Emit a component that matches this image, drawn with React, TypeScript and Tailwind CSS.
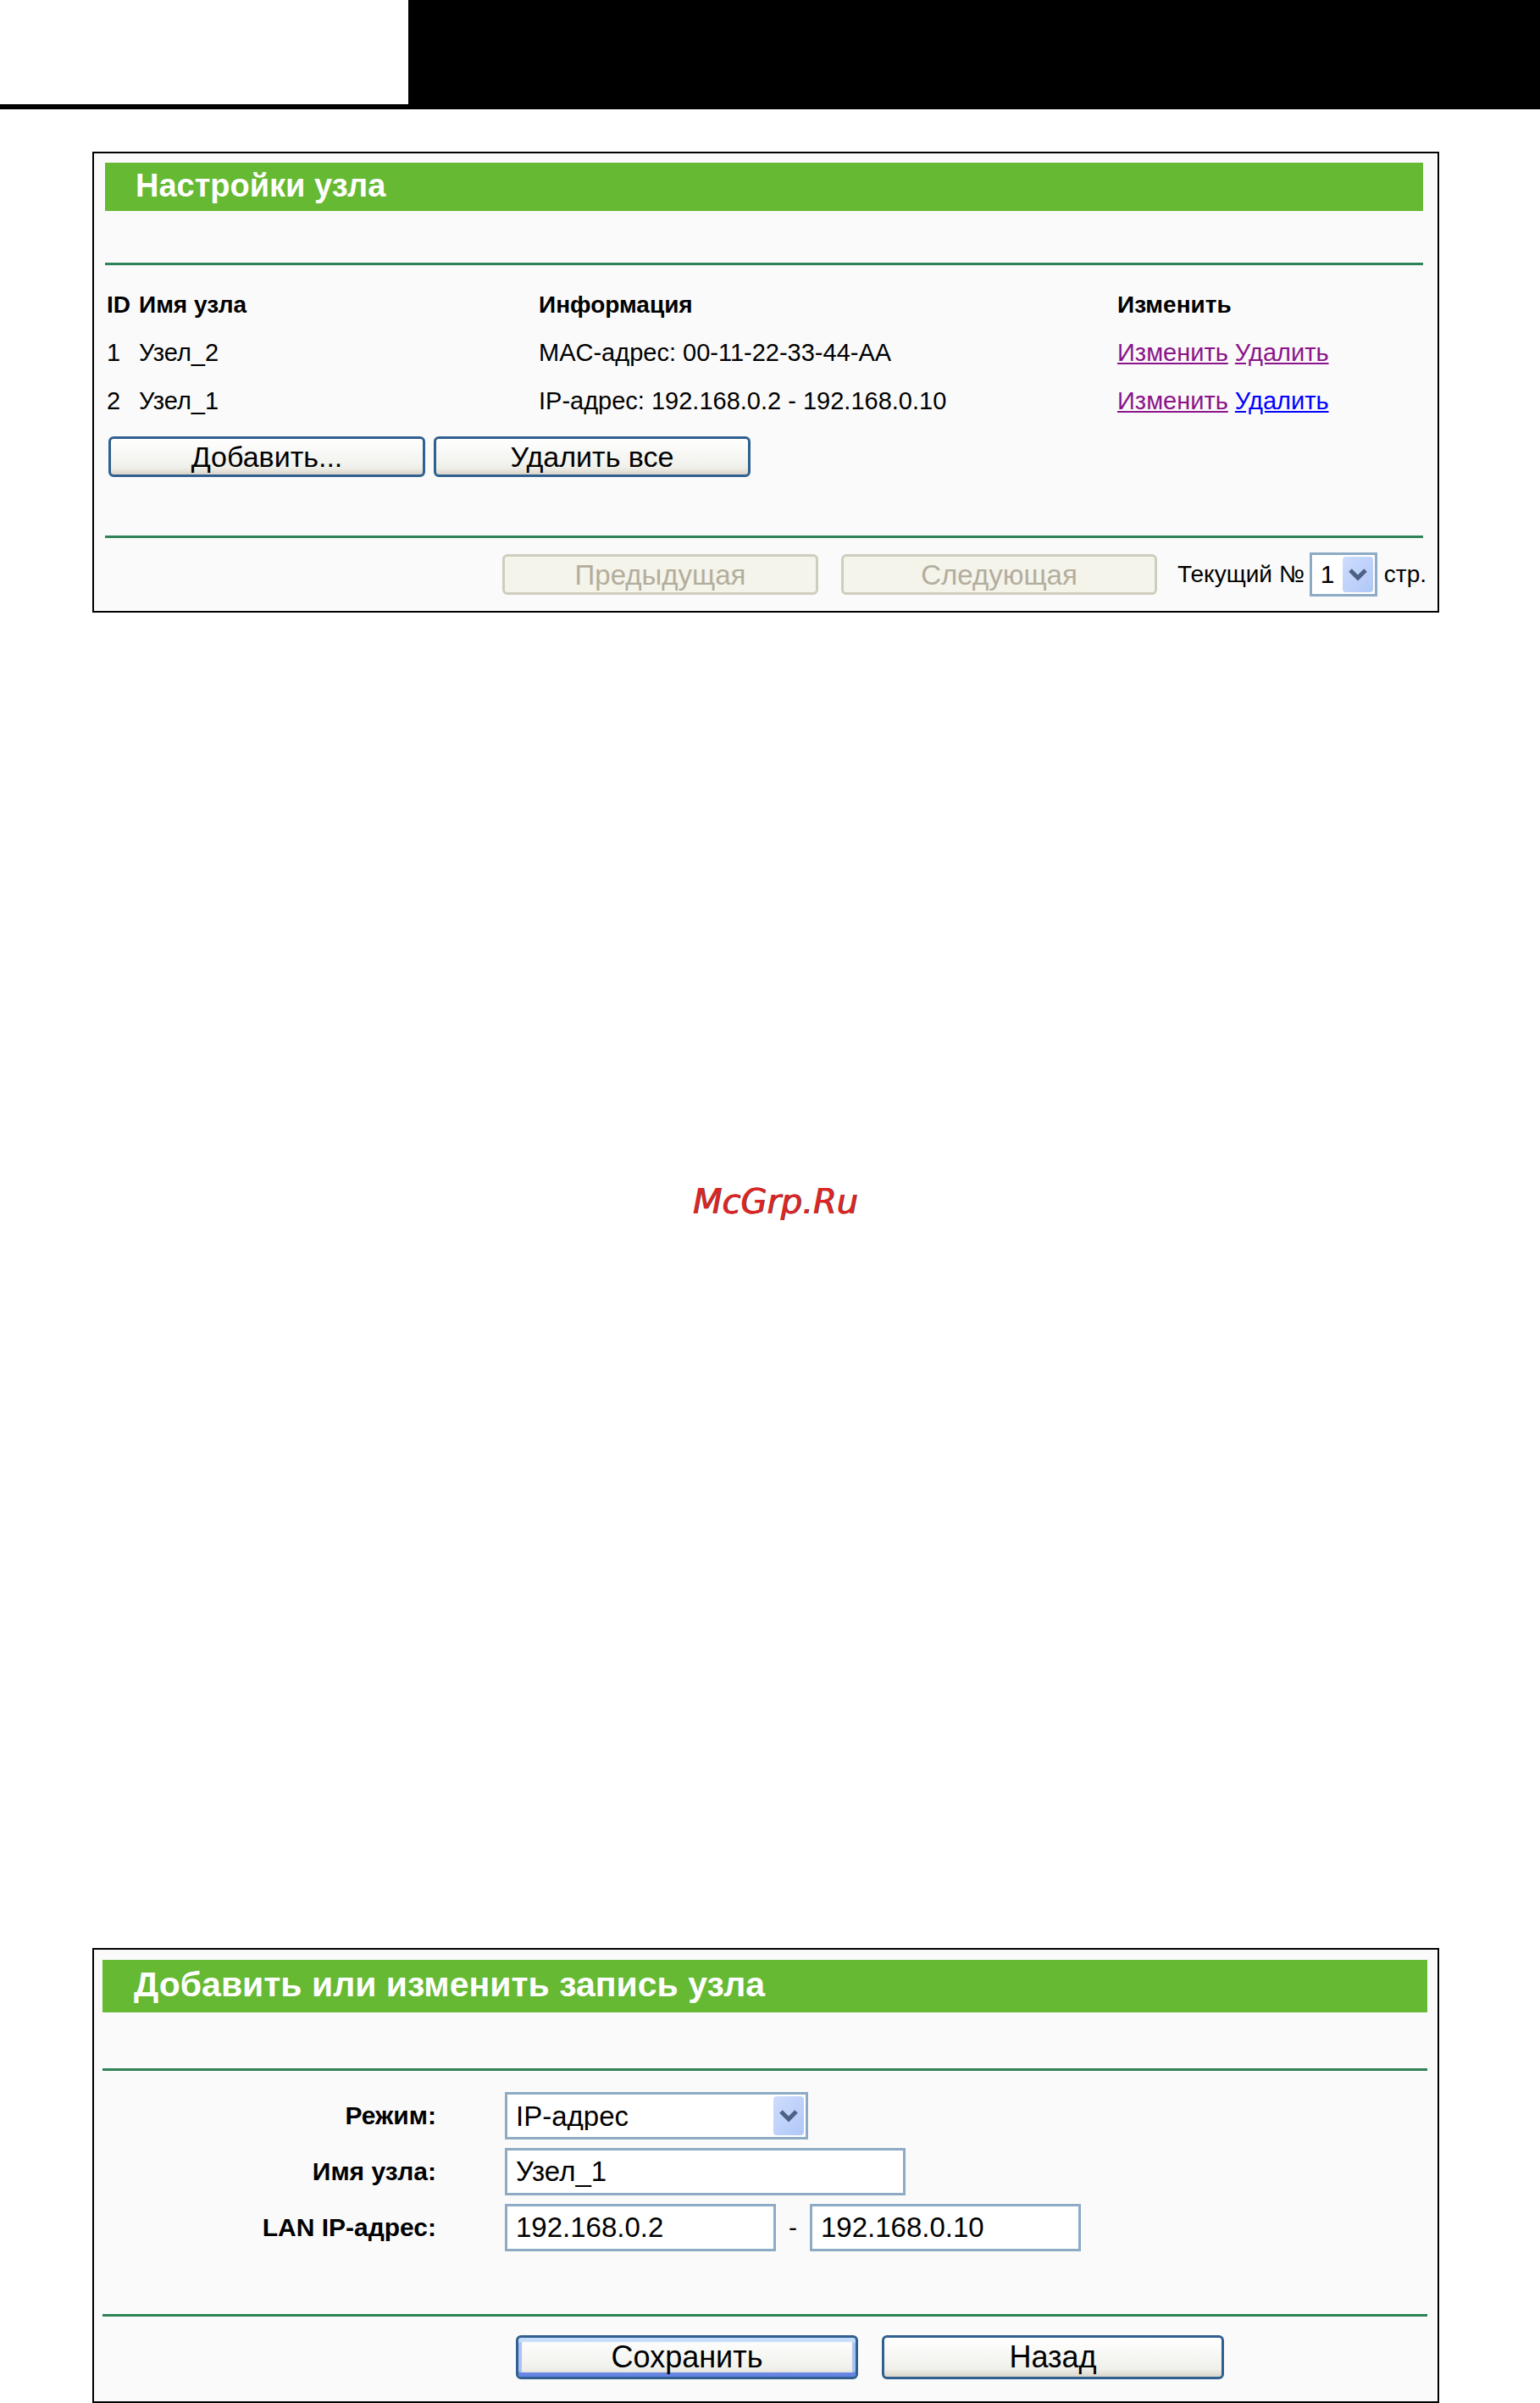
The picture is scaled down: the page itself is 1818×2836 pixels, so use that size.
import { useState } from 'react';
import type { ReactNode } from 'react';

const hosts = [
  { id: 1, name: 'Узел_2', info: 'MAC-адрес: 00-11-22-33-44-AA', deleteVisited: true },
  { id: 2, name: 'Узел_1', info: 'IP-адрес: 192.168.0.2 - 192.168.0.10', deleteVisited: false },
];

const buttonBase = 'rounded-md border-[3px] leading-none';
const buttonBlue = 'border-[#2f6090] bg-linear-to-b from-white via-[#f0f0eb] via-80% to-[#dad5ca] text-black';
const buttonGrey = 'border-[#cfcdbe] bg-[#f4f4ea] text-[#b3ad9d]';
const inputBase = 'h-14 border-[3px] border-[#8eabc5] bg-white px-2.5 text-[33px] leading-none';

const Panel = ({ title, inset, heading, children }: { title: string; inset: string; heading: string; children: ReactNode }) => (
  <section className={`border-2 border-black bg-[#fafafa] ${inset}`}>
    <h2 className={`flex items-center bg-[#66b933] leading-none font-bold text-white ${heading}`}>{title}</h2>
    {children}
  </section>
);

const Divider = () => <hr className="h-[3px] border-0 bg-[#2f8257]" />;

const Select = ({ id, options, className }: { id: string; options: string[]; className: string }) => (
  <div className={`relative ${className}`}>
    <select id={id} className="size-full appearance-none border-[3px] border-[#8eabc5] bg-white pl-2.5 leading-none">
      {options.map((option) => (
        <option key={option}>{option}</option>
      ))}
    </select>
    <span className="pointer-events-none absolute inset-y-[5px] right-[5px] flex w-9 items-center justify-center rounded bg-linear-to-br from-[#cfdcfd] to-[#afc8f7]">
      <svg className="h-4 w-6" viewBox="0 0 24 16" fill="none" stroke="#4d6185" strokeWidth="5">
        <path d="M3 3l9 9l9-9" />
      </svg>
    </span>
  </div>
);

const HostList = () => (
  <Panel title="Настройки узла" inset="pt-[11px] pr-[17px] pb-[17px] pl-[13px]" heading="h-[57px] pb-1 pl-9 text-[38px]">
    <div className="pt-[61px]">
      <Divider />
    </div>
    <table className="mt-[18px] w-full table-fixed text-left leading-none">
      <thead className="text-[28px]">
        <tr className="h-[57px]">
          <th className="w-10 pl-0.5">ID</th>
          <th className="w-[472px]">Имя узла</th>
          <th className="w-[683px]">Информация</th>
          <th>Изменить</th>
        </tr>
      </thead>
      <tbody className="text-[29px]">
        {hosts.map((host) => (
          <tr key={host.id} className="h-[57px]">
            <td className="pl-0.5">{host.id}</td>
            <td>{host.name}</td>
            <td>{host.info}</td>
            <td className="space-x-2">
              <a href="#edit" className="text-[#8b148b] underline">Изменить</a>
              <a href="#delete" className={host.deleteVisited ? 'text-[#8b148b] underline' : 'text-[#0000ff] underline'}>Удалить</a>
            </td>
          </tr>
        ))}
      </tbody>
    </table>
    <div className="mt-[13px] flex gap-2.5 pl-1 text-[34px]">
      <button className={`h-12 w-[374px] ${buttonBase} ${buttonBlue}`}>Добавить...</button>
      <button className={`h-12 w-[374px] ${buttonBase} ${buttonBlue}`}>Удалить все</button>
    </div>
    <div className="pt-[69px]">
      <Divider />
    </div>
    <div className="-mr-1 flex items-center justify-end pt-[17px] text-[28px] leading-none">
      <button disabled className={`mr-[27px] h-12 w-[373px] text-[33px] ${buttonBase} ${buttonGrey}`}>Предыдущая</button>
      <button disabled className={`mr-6 h-12 w-[373px] text-[33px] ${buttonBase} ${buttonGrey}`}>Следующая</button>
      <label htmlFor="page">Текущий №</label>
      <Select id="page" options={['1']} className="mr-2 ml-1.5 h-[52px] w-20 text-[30px]" />
      <span>стр.</span>
    </div>
  </Panel>
);

const HostForm = () => {
  const [name, setName] = useState('Узел_1');
  const [from, setFrom] = useState('192.168.0.2');
  const [to, setTo] = useState('192.168.0.10');

  return (
    <Panel title="Добавить или изменить запись узла" inset="pt-3 pr-3 pb-[26px] pl-2.5" heading="h-[62px] pb-1 pl-[37px] text-[41px]">
      <div className="pt-[66px]">
        <Divider />
      </div>
      <div className="grid grid-cols-[394px_1fr] items-center gap-x-[81px] gap-y-2.5 pt-[25px] text-[30px] leading-none">
        <label htmlFor="mode" className="text-right font-bold">Режим:</label>
        <Select id="mode" options={['IP-адрес', 'MAC-адрес']} className="h-14 w-[358px] text-[33px]" />
        <label htmlFor="name" className="text-right font-bold">Имя узла:</label>
        <input id="name" value={name} onChange={(e) => setName(e.target.value)} className={`w-[473px] ${inputBase}`} />
        <label htmlFor="from" className="text-right font-bold">LAN IP-адрес:</label>
        <div className="flex items-center">
          <input id="from" value={from} onChange={(e) => setFrom(e.target.value)} className={`w-80 ${inputBase}`} />
          <span className="w-10 text-center">-</span>
          <input aria-label="LAN IP-адрес" value={to} onChange={(e) => setTo(e.target.value)} className={`w-80 ${inputBase}`} />
        </div>
      </div>
      <div className="pt-[74px]">
        <Divider />
      </div>
      <div className="flex gap-7 pt-[22px] pl-[488px] text-[36px]">
        <button className={`h-[52px] w-[404px] shadow-[inset_0_5px_1px_#c6defc,inset_0_-5px_1px_#6584e4,inset_4px_0_1px_#a9c2f3,inset_-4px_0_1px_#a9c2f3] ${buttonBase} ${buttonBlue}`}>Сохранить</button>
        <button className={`h-[52px] w-[404px] ${buttonBase} ${buttonBlue}`}>Назад</button>
      </div>
    </Panel>
  );
};

const App = () => {
  return (
    <div className="relative flex min-h-screen flex-col bg-white font-['Liberation_Sans',Arial,sans-serif] text-black">
      <header className="flex border-b-[6px] border-black">
        <div className="h-[123px] w-[482px] bg-white" />
        <div className="flex-1 bg-black" />
      </header>
      <main className="flex flex-1 flex-col justify-between pt-[50px] pr-[119px] pl-[109px]">
        <HostList />
        <HostForm />
      </main>
      <div className="absolute inset-x-0 top-1/2 -translate-y-1/2 pl-3 text-center">
        <a href="#mcgrp" className="font-['DejaVu_Sans',sans-serif] text-[40px] text-[#dc2626] italic text-shadow-[1px_0_0_#5a2a2a]">
          McGrp.Ru
        </a>
      </div>
    </div>
  );
};

export default App;
